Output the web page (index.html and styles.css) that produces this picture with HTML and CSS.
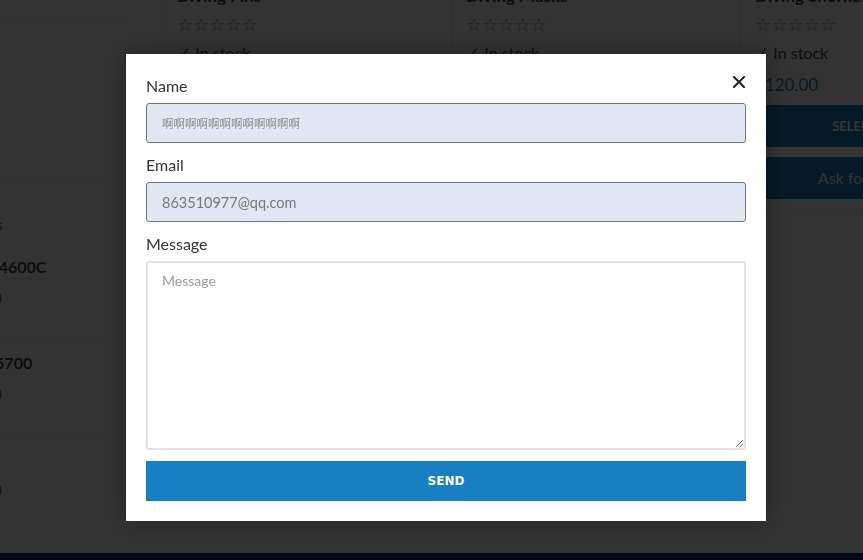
FILE: index.html
```html
<!DOCTYPE html>
<html lang="en">
<head>
    <meta charset="UTF-8">
    <meta name="viewport" content="width=device-width, initial-scale=1.0">
    <title>Diving Shop - Ask for quote</title>
    <link rel="stylesheet" href="styles.css">
</head>
<body>

    <!-- Shop page (under the overlay) -->
    <div class="page">
        <aside class="sidebar">
            <div class="sidebar-inner">
                <div class="widget widget-top"></div>
                <div class="widget widget-filter"></div>
                <h4 class="widget-title">Top rated products</h4>
                <ul class="mini-list">
                    <li class="mini-item">
                        <div class="mini-thumb"></div>
                        <div class="mini-info">
                            <span class="mini-name">Octopus 4600C</span>
                            <span class="mini-price">$1,320.00</span>
                        </div>
                    </li>
                    <li class="mini-item">
                        <div class="mini-thumb"></div>
                        <div class="mini-info">
                            <span class="mini-name">Gauge G5700</span>
                            <span class="mini-price">$1,450.00</span>
                        </div>
                    </li>
                    <li class="mini-item">
                        <div class="mini-thumb"></div>
                        <div class="mini-info">
                            <span class="mini-name">Hood</span>
                            <span class="mini-price">$1,060.00</span>
                        </div>
                    </li>
                </ul>
            </div>
        </aside>

        <main class="products">
            <div class="product">
                <h3 class="product-title">Diving Fins</h3>
                <div class="stars">☆☆☆☆☆</div>
                <div class="stock"><span class="check">✓</span> In stock</div>
                <div class="price">$120.00</div>
                <a class="btn btn-select">Select options</a>
                <a class="btn btn-quote">Ask for a quotation</a>
            </div>
            <div class="product">
                <h3 class="product-title">Diving Masks</h3>
                <div class="stars">☆☆☆☆☆</div>
                <div class="stock"><span class="check">✓</span> In stock</div>
                <div class="price">$120.00</div>
                <a class="btn btn-select">Select options</a>
                <a class="btn btn-quote">Ask for a quotation</a>
            </div>
            <div class="product">
                <h3 class="product-title">Diving Snorkel</h3>
                <div class="stars">☆☆☆☆☆</div>
                <div class="stock"><span class="check">✓</span> In stock</div>
                <div class="price">$120.00</div>
                <a class="btn btn-select">Select options</a>
                <a class="btn btn-quote">Ask for a quotation</a>
            </div>
        </main>
    </div>

    <footer class="site-footer"></footer>

    <!-- Quote modal -->
    <div class="overlay">
        <div class="modal">
            <button class="close-btn" aria-label="Close">
                <svg width="12" height="12" viewBox="0 0 12 12">
                    <path d="M1 1 L11 11 M11 1 L1 11" stroke="#222" stroke-width="2" stroke-linecap="square"/>
                </svg>
            </button>
            <form class="quote-form">
                <label class="field-label">Name</label>
                <input class="field field-cjk" type="text" value="啊啊啊啊啊啊啊啊啊啊啊啊">

                <label class="field-label">Email</label>
                <input class="field" type="email" value="863510977@qq.com">

                <label class="field-label">Message</label>
                <textarea class="field-message" placeholder="Message"></textarea>

                <button class="send-btn" type="button">SEND</button>
            </form>
        </div>
    </div>

</body>
</html>
```

FILE: styles.css
```css
/* Basic resets */
body {
    margin: 0;
    padding: 0;
    font-family: Lato, "Open Sans", sans-serif;
    background-color: #fff;
    color: #555;
    overflow: hidden;
}

/* Shop page behind the modal */
.page {
    display: flex;
    height: 553px;
    overflow: hidden;
}

.sidebar {
    width: 162px;
    flex-shrink: 0;
    overflow: hidden;
}

.sidebar-inner {
    width: 265px;
    margin-left: -105px;
}

.widget-top {
    height: 20px;
    margin-right: 30px;
    border-bottom: 1px solid #eee;
}

.widget-filter {
    height: 162px;
    border-bottom: 1px solid #eee;
}

.widget-title {
    margin: 30px 0 0;
    line-height: 22px;
    font-size: 13px;
    font-weight: normal;
    color: #444;
}

.mini-list {
    list-style: none;
    margin: 5px 0 0;
    padding: 0;
}

.mini-item {
    display: flex;
    gap: 4px;
    padding: 15px 0 27px;
    border-bottom: 1px solid #eee;
}

.mini-item:last-child {
    border-bottom: none;
}

.mini-thumb {
    width: 35px;
    height: 35px;
    background-color: #f2f2f2;
}

.mini-info {
    display: flex;
    flex-direction: column;
}

.mini-name {
    line-height: 22px;
    font-size: 16px;
    font-weight: bold;
    color: #444;
}

.mini-price {
    margin-top: 9px;
    line-height: 22px;
    font-size: 15px;
    color: #1a7fc1;
}

/* Product grid */
.products {
    display: flex;
    margin-top: -16px;
}

.product {
    width: 289px;
    flex-shrink: 0;
    box-sizing: border-box;
    padding: 0 14px 15px;
    border-left: 1px solid #eee;
    border-bottom: 1px solid #eee;
    align-self: flex-start;
}

.product-title {
    margin: 0;
    line-height: 24px;
    font-size: 17px;
    font-weight: bold;
    color: #444;
}

.stars {
    margin-top: 8px;
    height: 18px;
    line-height: 18px;
    font-family: "DejaVu Sans", sans-serif;
    font-size: 18px;
    letter-spacing: 0;
    color: #888;
}

.stock {
    margin-top: 8px;
    line-height: 22px;
    font-size: 16px;
    color: #444;
}

.check {
    color: #1a7fc1;
    font-family: "DejaVu Sans", sans-serif;
    font-size: 17px;
}

.price {
    margin-top: 10px;
    line-height: 22px;
    font-size: 17px;
    color: #1a7fc1;
}

.btn {
    display: block;
    background-color: #1a7fc1;
    color: #fff;
    text-align: center;
}

.btn-select {
    margin-top: 9px;
    line-height: 42px;
    font-size: 13px;
    font-weight: bold;
    text-transform: uppercase;
}

.btn-quote {
    margin-top: 10px;
    line-height: 42px;
    font-size: 16px;
}

.site-footer {
    height: 7px;
    background-color: #003264;
}

/* Modal overlay */
.overlay {
    position: fixed;
    top: 0;
    left: 0;
    width: 100%;
    height: 100%;
    background-color: rgba(0, 0, 0, 0.8);
    padding: 54px 0 0 126px;
    box-sizing: border-box;
}

.modal {
    position: relative;
    width: 640px;
    box-sizing: border-box;
    padding: 21px 20px 20px;
    background-color: #fff;
    box-shadow: 0 0 25px rgba(0, 0, 0, 0.35);
}

.close-btn {
    position: absolute;
    top: 22px;
    right: 21px;
    width: 12px;
    height: 12px;
    padding: 0;
    border: none;
    background: none;
    display: flex;
    align-items: center;
    justify-content: center;
    cursor: pointer;
}

.quote-form {
    display: flex;
    flex-direction: column;
}

.field-label {
    line-height: 22px;
    font-size: 16px;
    color: #333;
    margin-bottom: 6px;
}

.field {
    height: 40px;
    box-sizing: border-box;
    margin: 0 0 11px;
    padding: 0 15px;
    border: 1px solid #6b7585;
    border-radius: 3px;
    background-color: #e1e8f4;
    font-family: Lato, sans-serif;
    font-size: 14.5px;
    color: #777;
    outline: none;
}

.field-cjk {
    font-family: "Noto Sans CJK SC", sans-serif;
    font-size: 11.5px;
    color: #888;
}

.field-message {
    height: 189px;
    box-sizing: border-box;
    margin: 0 0 11px;
    padding: 9px 14px;
    border: 2px solid #e2e2e2;
    border-radius: 3px;
    font-family: Lato, sans-serif;
    font-size: 14px;
    resize: vertical;
    outline: none;
}

.field-message::placeholder {
    color: #999;
}

.send-btn {
    height: 40px;
    border: none;
    background-color: #177fc1;
    color: #fff;
    font-family: "DejaVu Sans", sans-serif;
    font-size: 12px;
    font-weight: bold;
    cursor: pointer;
}
```
